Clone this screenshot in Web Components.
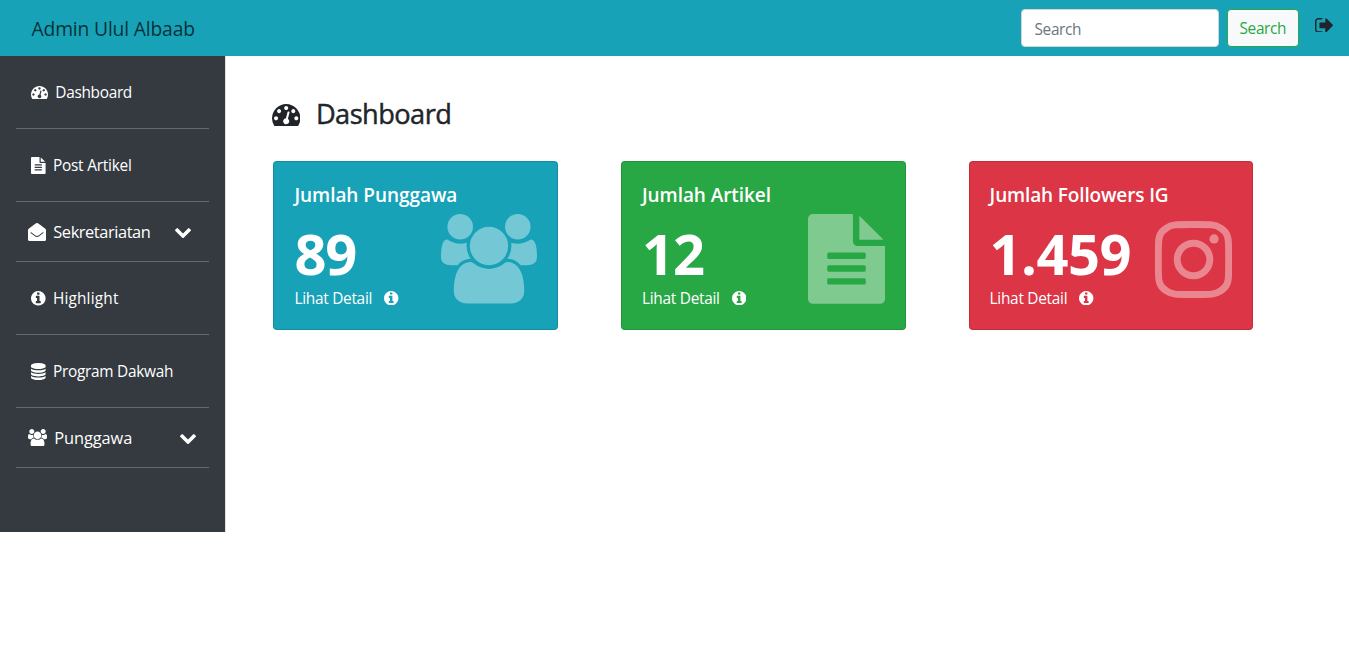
<!DOCTYPE html>
<html lang="id">
<head>
<meta charset="utf-8">
<title>Admin Ulul Albaab</title>
<style>
html,body{margin:0;padding:0;background:#fff}
body{font-family:"Open Sans","Noto Sans",sans-serif;font-size:15.4px;line-height:24px;color:#212529}
</style>
</head>
<body>
<admin-app></admin-app>
<script>
// Icon shapes: view box and markup
const ICONS = {
  tachometer: ['0 256 1792 1408', '<path d="M384 1152q0-53-37.5-90.5t-90.5-37.5-90.5 37.5-37.5 90.5 37.5 90.5 90.5 37.5 90.5-37.5 37.5-90.5zm192-448q0-53-37.5-90.5t-90.5-37.5-90.5 37.5-37.5 90.5 37.5 90.5 90.5 37.5 90.5-37.5 37.5-90.5zm428 481l101-382q6-26-7.5-48.5t-38.5-29.5-48 6.5-30 39.5l-101 382q-60 5-107 43.5t-63 98.5q-20 77 20 146t117 89 146-20 89-117q16-60-6-117t-72-91zm660-33q0-53-37.5-90.5t-90.5-37.5-90.5 37.5-37.5 90.5 37.5 90.5 90.5 37.5 90.5-37.5 37.5-90.5zm-640-640q0-53-37.5-90.5t-90.5-37.5-90.5 37.5-37.5 90.5 37.5 90.5 90.5 37.5 90.5-37.5 37.5-90.5zm448 192q0-53-37.5-90.5t-90.5-37.5-90.5 37.5-37.5 90.5 37.5 90.5 90.5 37.5 90.5-37.5 37.5-90.5zm320 448q0 261-141 483-19 29-54 29h-1402q-35 0-54-29-141-221-141-483 0-182 71-348t191-286 286-191 348-71 348 71 286 191 191 286 71 348z"/>'],
  file: ['128 0 1536 1792', '<path d="M1596 476q14 14 28 36h-472v-472q22 14 36 28zm-476 164h544v1056q0 40-28 68t-68 28h-1344q-40 0-68-28t-28-68v-1600q0-40 28-68t68-28h800v544q0 40 28 68t68 28zm160 736v-64q0-14-9-23t-23-9h-704q-14 0-23 9t-9 23v64q0 14 9 23t23 9h704q14 0 23-9t9-23zm0-256v-64q0-14-9-23t-23-9h-704q-14 0-23 9t-9 23v64q0 14 9 23t23 9h704q14 0 23-9t9-23zm0-256v-64q0-14-9-23t-23-9h-704q-14 0-23 9t-9 23v64q0 14 9 23t23 9h704q14 0 23-9t9-23z"/>'],
  envelope: ['0 0 1792 1792', '<path fill-rule="evenodd" d="M0 690Q0 640 48 598Q160 510 700 100Q800 10 896 10T1092 100Q1632 510 1744 598Q1792 640 1792 690V1632Q1792 1792 1632 1792H160Q0 1792 0 1632ZM262 1000L620 1270Q790 1400 896 1400T1172 1270L1530 1000Q1556 978 1535 950L1516 926Q1498 905 1470 925L1120 1190Q960 1300 896 1300T672 1190L322 925Q294 905 276 926L257 950Q236 978 262 1000Z"/>'],
  info: ['128 128 1536 1536', '<path d="M1152 1376v-160q0-14-9-23t-23-9h-96v-512q0-14-9-23t-23-9h-320q-14 0-23 9t-9 23v160q0 14 9 23t23 9h96v320h-96q-14 0-23 9t-9 23v160q0 14 9 23t23 9h448q14 0 23-9t9-23zm-128-896v-160q0-14-9-23t-23-9h-192q-14 0-23 9t-9 23v160q0 14 9 23t23 9h192q14 0 23-9t9-23zm640 416q0 209-103 385.5t-279.5 279.5-385.5 103-385.5-103-279.5-279.5-103-385.5 103-385.5 279.5-279.5 385.5-103 385.5 103 279.5 279.5 103 385.5z"/>'],
  database: ['128 0 1536 1792', '<path d="M896 768q237 0 443-43t325-127v170q0 69-103 128t-280 93.5-385 34.5-385-34.5-280-93.5-103-128v-170q119 84 325 127t443 43zm0 768q237 0 443-43t325-127v170q0 69-103 128t-280 93.5-385 34.5-385-34.5-280-93.5-103-128v-170q119 84 325 127t443 43zm0-384q237 0 443-43t325-127v170q0 69-103 128t-280 93.5-385 34.5-385-34.5-280-93.5-103-128v-170q119 84 325 127t443 43zm0-1152q208 0 385 34.5t280 93.5 103 128v128q0 69-103 128t-280 93.5-385 34.5-385-34.5-280-93.5-103-128v-128q0-69 103-128t280-93.5 385-34.5z"/>'],
  users: ['0 0 1920 1792', '<path d="M593 896q-162 5-265 128h-134q-82 0-138-40.5t-56-118.5q0-353 124-353 6 0 43.5 21t97.5 42.5 119 21.5q67 0 133-23-5 37-5 66 0 139 81 256zm1071 637q0 120-73 189.5t-194 69.5h-874q-121 0-194-69.5t-73-189.5q0-53 3.5-103.5t14-109 26.5-108.5 43-97.5 62-81 85.5-53.5 111.5-20q10 0 43 21.5t73 48 107 48 135 21.5 135-21.5 107-48 73-48 43-21.5q61 0 111.5 20t85.5 53.5 62 81 43 97.5 26.5 108.5 14 109 3.5 103.5zm-1024-1277q0 106-75 181t-181 75-181-75-75-181 75-181 181-75 181 75 75 181zm704 384q0 159-112.5 271.5t-271.5 112.5-271.5-112.5-112.5-271.5 112.5-271.5 271.5-112.5 271.5 112.5 112.5 271.5zm576 225q0 78-56 118.5t-138 40.5h-134q-103-123-265-128 81-117 81-256 0-29-5-66 66 23 133 23 59 0 119-21.5t97.5-42.5 43.5-21q124 0 124 353zm-128-609q0 106-75 181t-181 75-181-75-75-181 75-181 181-75 181 75 75 181z"/>'],
  chevron: ['90 533 1612 1035', '<path d="M1683 808l-742 741q-19 19-45 19t-45-19l-742-741q-19-19-19-45.5t19-45.5l166-165q19-19 45-19t45 19l531 531 531-531q19-19 45-19t45 19l166 165q19 19 19 45.5t-19 45.5z"/>'],
  signout: ['64 256 1568 1280', '<path d="M704 1440q0 4 1 20t.5 26.5-3 23.5-10 19.5-20.5 6.5h-320q-119 0-203.5-84.5t-84.5-203.5v-704q0-119 84.5-203.5t203.5-84.5h320q13 0 22.5 9.5t9.5 22.5q0 4 1 20t.5 26.5-3 23.5-10 19.5-20.5 6.5h-320q-66 0-113 47t-47 113v704q0 66 47 113t113 47h312l11.5 1 11.5 3 8 5.5 7 9 2 13.5zm928-544q0 26-19 45l-544 544q-19 19-45 19t-45-19-19-45v-288h-448q-26 0-45-19t-19-45v-384q0-26 19-45t45-19h448v-288q0-26 19-45t45-19 45 19l544 544q19 19 19 45z"/>'],
  instagram: ['0 0 1536 1536', '<g fill="none" stroke="currentColor"><path stroke-width="138" d="M768 69C430 69 330 66 230 140C90 225 69 330 69 480C66 620 66 916 69 1056C69 1206 90 1311 230 1396C330 1470 430 1467 768 1467S1206 1470 1306 1396C1446 1311 1467 1206 1467 1056C1470 916 1470 620 1467 480C1467 330 1446 225 1306 140C1206 66 1106 69 768 69Z"/><circle cx="768" cy="768" r="325" stroke-width="138"/></g><circle cx="1178" cy="358" r="92"/>']
};

function make(tag, cls, attrs) {
  const n = document.createElement(tag);
  if (cls) n.className = cls;
  for (const k in attrs) n.setAttribute(k, attrs[k]);
  return n;
}

function define(name, css, html, setup) {
  const t = document.createElement('template');
  t.innerHTML = `<style>${css}</style>${html}`;
  customElements.define(name, class extends HTMLElement {
    connectedCallback() {
      if (this.shadowRoot) return;
      const root = this.attachShadow({mode: 'open'});
      root.append(t.content.cloneNode(true));
      if (setup) setup(this, root);
    }
  });
}

// <ui-icon name size>: size is the drawn width in pixels
define('ui-icon', ':host{display:block;flex:none}svg{display:block;fill:currentColor}', '<svg aria-hidden="true"></svg>', (el, root) => {
  const [box, body] = ICONS[el.getAttribute('name')];
  const svg = root.querySelector('svg');
  const [, , w, h] = box.split(' ').map(Number);
  const size = +el.getAttribute('size');
  svg.setAttribute('viewBox', box);
  svg.setAttribute('width', size);
  svg.setAttribute('height', size * h / w);
  svg.innerHTML = body;
});

// <ui-label text fit>: one line of text, tracked to the given measure
define('ui-label', ':host{display:block;flex:none;white-space:nowrap}span{display:inline-block}', '<span></span>', (el, root) => {
  const s = root.querySelector('span');
  const text = el.getAttribute('text');
  s.textContent = text;
  const want = +el.getAttribute('fit');
  if (want) s.style.letterSpacing = (want - s.getBoundingClientRect().width) / (text.length - 1) + 'px';
});

define('top-bar', `
:host{display:flex;align-items:center;box-sizing:border-box;height:56px;padding:0 16.5px 0 31.5px;background:#17a2b8}
.brand{font-size:19.3px;line-height:30px;color:rgba(0,0,0,.72);margin:2px auto 0 0}
.field{display:flex;align-items:center;box-sizing:border-box;width:198px;height:38px;padding:4px 12px 0 12.5px;border:1px solid #ced4da;border-radius:4px;background:#fff;color:#6c757d}
.btn{display:flex;align-items:center;box-sizing:border-box;width:71.5px;height:38px;margin:0 16px 0 8px;padding:2px 11.5px 0;border:1px solid #28a745;border-radius:4px;background:#f8f9fa;color:#28a745}
.out{margin-bottom:6px}`,
`<ui-label class="brand" text="Admin Ulul Albaab" fit="163.5"></ui-label>
<div class="field"><ui-label text="Search" fit="47"></ui-label></div>
<div class="btn"><ui-label text="Search" fit="47"></ui-label></div>
<ui-icon class="out" name="signout" size="18"></ui-icon>`);

define('nav-item', `
:host{display:flex;align-items:center;box-sizing:border-box;height:73px;margin:0 16px;padding-left:15px;border-bottom:1px solid #64686f;color:#fff}
:host([group]){height:60px;padding-left:12px;font-size:16.4px}
.label{margin:2px 0 0 7.3px}
:host([group]) .label{margin-top:0}
.icon{margin-top:1px}
:host([group]) .icon{margin-top:0}
.arrow{margin:3px 0 0 auto}`, '', (el, root) => {
  root.append(
    make('ui-icon', 'icon', {name: el.getAttribute('icon'), size: el.getAttribute('size')}),
    make('ui-label', 'label', {text: el.getAttribute('label'), fit: el.getAttribute('fit')}));
  if (el.hasAttribute('group')) {
    const a = make('ui-icon', 'arrow', {name: 'chevron', size: 16});
    a.style.marginRight = el.getAttribute('group') + 'px';
    root.append(a);
  }
});

define('side-nav', `
:host{display:block;flex:none;box-sizing:border-box;width:225px;height:476px;background:#343a40;box-shadow:1px 0 0 #dfe0e1}`,
`<nav>
<nav-item icon="tachometer" size="17" label="Dashboard" fit="77"></nav-item>
<nav-item icon="file" size="14.6" label="Post Artikel" fit="79"></nav-item>
<nav-item group="18.5" icon="envelope" size="18" label="Sekretariatan" fit="97.5"></nav-item>
<nav-item icon="info" size="14.6" label="Highlight" fit="65.5"></nav-item>
<nav-item icon="database" size="14.6" label="Program Dakwah" fit="120.5"></nav-item>
<nav-item group="13.5" icon="users" size="19" label="Punggawa" fit="78"></nav-item>
</nav>`);

define('stat-card', `
:host{display:flex;justify-content:space-between;box-sizing:border-box;height:169px;padding:20px 20px 0 20px;border:1px solid rgba(0,0,0,.125);border-radius:4px;color:#fff;background:var(--tone);background-clip:border-box}
.text{flex:none;width:0}
.title{font-size:19px;font-weight:600;line-height:28px;margin-top:-1px}
.num{font-size:56px;font-weight:700;line-height:46px;margin:21px 0 9px}
.more{display:flex;align-items:center;gap:12px}
.more ui-label{margin-top:2px}
.art{opacity:.4;margin-top:var(--drop,32px)}`,
`<div class="text"><div class="title"></div><div class="num"></div>
<div class="more"><ui-label text="Lihat Detail" fit="78"></ui-label><ui-icon name="info" size="14.4"></ui-icon></div></div><div class="art"></div>`, (el, root) => {
  const put = (sel, tag, attrs) => {
    for (const k in attrs) attrs[k] = el.getAttribute(attrs[k]);
    root.querySelector(sel).append(make(tag, '', attrs));
  };
  put('.title', 'ui-label', {text: 'label', fit: 'label-fit'});
  put('.num', 'ui-label', {text: 'value', fit: 'value-fit'});
  put('.art', 'ui-icon', {name: 'icon', size: 'icon-size'});
});

define('main-panel', `
:host{display:block;flex:1;padding:41px 96px 0 47px}
header{display:flex;align-items:center;height:34px}
header ui-icon{margin-top:2px}
h1{font-size:27.2px;font-weight:400;-webkit-text-stroke:.45px currentColor;line-height:34px;margin:0 0 0 15.5px}
.cards{display:grid;grid-template-columns:repeat(3,284.6px);column-gap:63px;margin:30px 0 0 1.4px}`,
`<header><ui-icon name="tachometer" size="28.4"></ui-icon><h1><ui-label text="Dashboard" fit="136"></ui-label></h1></header>
<section class="cards">
<stat-card style="--tone:#17a2b8" label="Jumlah Punggawa" label-fit="163" value="89" value-fit="63" icon="users" icon-size="96"></stat-card>
<stat-card style="--tone:#28a745" label="Jumlah Artikel" label-fit="129" value="12" value-fit="63" icon="file" icon-size="77"></stat-card>
<stat-card style="--tone:#dc3545;--drop:38.5px" label="Jumlah Followers IG" label-fit="179" value="1.459" value-fit="142" icon="instagram" icon-size="77"></stat-card>
</section>`);

define('admin-app', `:host{display:block}.body{display:flex;align-items:flex-start}`,
`<top-bar></top-bar><div class="body"><side-nav></side-nav><main-panel></main-panel></div>`);
</script>
</body>
</html>
